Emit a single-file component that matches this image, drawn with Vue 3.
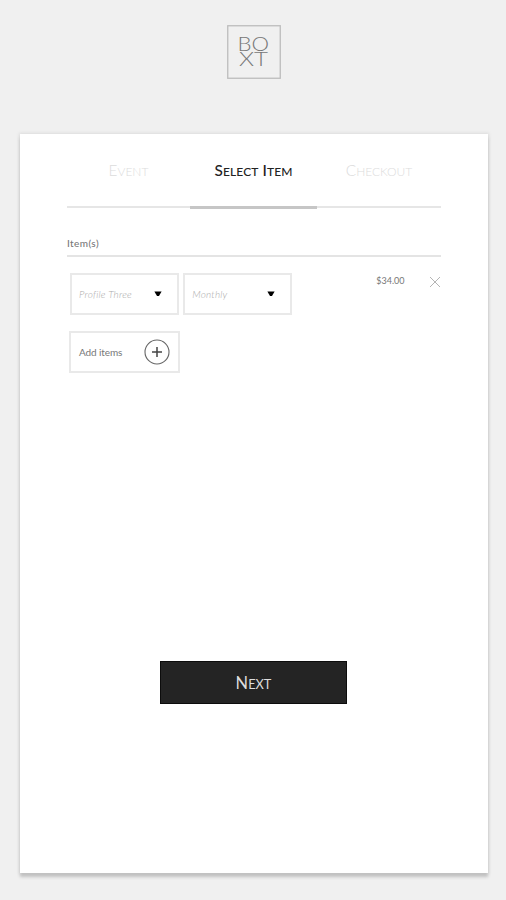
<script setup>
const steps = [
  { words: ['Event'], key: 'event' },
  { words: ['Select', 'Item'], key: 'item', active: true },
  { words: ['Checkout'], key: 'checkout' },
]
const selects = ['Profile Three', 'Monthly']
</script>

<template>
  <main class="page">
    <header class="logo">
      <svg width="54" height="54" viewBox="0 0 54 54" role="img" aria-label="BOXT">
        <rect x=".75" y=".75" width="52.5" height="52.5" fill="none" stroke="#bcbcbc" stroke-width="1.3" />
        <text x="10.5" y="26.3" textLength="31.5" lengthAdjust="spacingAndGlyphs">BO</text>
        <text x="12" y="41.3" textLength="29" lengthAdjust="spacingAndGlyphs">XT</text>
      </svg>
    </header>

    <section class="card">
      <nav class="steps">
        <div v-for="s in steps" :key="s.key" class="step" :class="{ active: s.active }">
          <span v-for="w in s.words" :key="w" class="word">{{ w }}</span>
        </div>
      </nav>

      <h2 class="heading"><span>Item(s)</span></h2>

      <div class="row">
        <button v-for="s in selects" :key="s" class="select">
          <span class="value">{{ s }}</span>
          <svg class="caret" width="8" height="6" viewBox="0 0 8 6"><path d="M.4.5h7.2L5 5H3z" fill="#000" /></svg>
        </button>
        <span class="price">$34.00</span>
        <svg class="remove" width="12" height="12" viewBox="0 0 12 12"><path d="M1 1l10 10M11 1L1 11" stroke="#b4b4b4" stroke-width="1" /></svg>
      </div>

      <button class="add">
        <span>Add items</span>
        <svg width="26" height="26" viewBox="0 0 26 26" fill="none">
          <circle cx="13" cy="13" r="12" stroke="#666" stroke-width="1.1" />
          <path d="M13 8v10M8 13h10" stroke="#444" stroke-width="1.5" />
        </svg>
      </button>

      <button class="next"><span class="word">Next</span></button>
    </section>
  </main>
</template>

<style>
body { background: #f0f0f0; }
</style>

<style scoped>
* { box-sizing: border-box; }
.page {
  height: 900px;
  padding: 25px 18px 0 20px;
  background: #f0f0f0;
  font-family: Lato, "Liberation Sans", sans-serif;
  overflow: hidden;
}
.logo { height: 109px; padding-left: 207px; }
.logo svg { display: block; }
.logo text { font-size: 19px; font-weight: 300; fill: #777; }
.card {
  height: 739px;
  padding: 0 47px;
  background: #fff;
  box-shadow: 0 4px 3px #c2c2c2, 0 0 3px 1px #dcdcdc;
}
button { margin: 0; font-family: inherit; background: #fff; }
.steps { display: grid; grid-template-columns: 123px 127px 124px; height: 75px; }
.step {
  display: flex;
  justify-content: center;
  gap: 4px;
  padding-top: 25px;
  height: 74px;
  border-bottom: 2px solid #e6e6e6;
  color: #dcdcdc;
  font-size: 12px;
  font-weight: 300;
  line-height: 22px;
}
.step.active { height: 75px; border-bottom: 3px solid #c6c6c6; color: #222; font-weight: 500; }
.word { display: inline-block; text-transform: uppercase; white-space: nowrap; }
.word::first-letter { font-size: 1.28em; }
.step.active .word { letter-spacing: .1px; }
.heading {
  margin: 0;
  height: 48px;
  padding-top: 27px;
  border-bottom: 2px solid #e4e4e4;
  color: #777;
  font-size: 10px;
  font-weight: 500;
  line-height: 15px;
  letter-spacing: .4px;
}
.row { display: flex; margin: 16px 0 0 3px; height: 42px; }
.select, .add {
  display: flex;
  align-items: center;
  justify-content: space-between;
  width: 110px;
  height: 42px;
  border: 2px solid #e9e9e9;
}
.select { margin-right: 4px; padding: 0 15px 0 7px; }
.value { color: #aaa; font-size: 10px; font-style: italic; font-weight: 300; letter-spacing: .2px; }
.price { width: 30px; margin: 1px 0 0 80px; color: #777; font-size: 9px; line-height: 13px; }
.remove { margin: 3px 0 0 23px; flex: none; }
.add { margin: 16px 0 0 2px; padding: 0 8px; width: 111px; color: #777; font-size: 10px; letter-spacing: -.1px; }
.next {
  display: block;
  width: 187px;
  height: 43px;
  margin: 288px 0 0 93px;
  padding: 2px 0 0;
  border: 1px solid #0c0c0c;
  background: #242424;
  color: #ddd;
  font-size: 12.8px;
  line-height: 22px;
}
</style>
